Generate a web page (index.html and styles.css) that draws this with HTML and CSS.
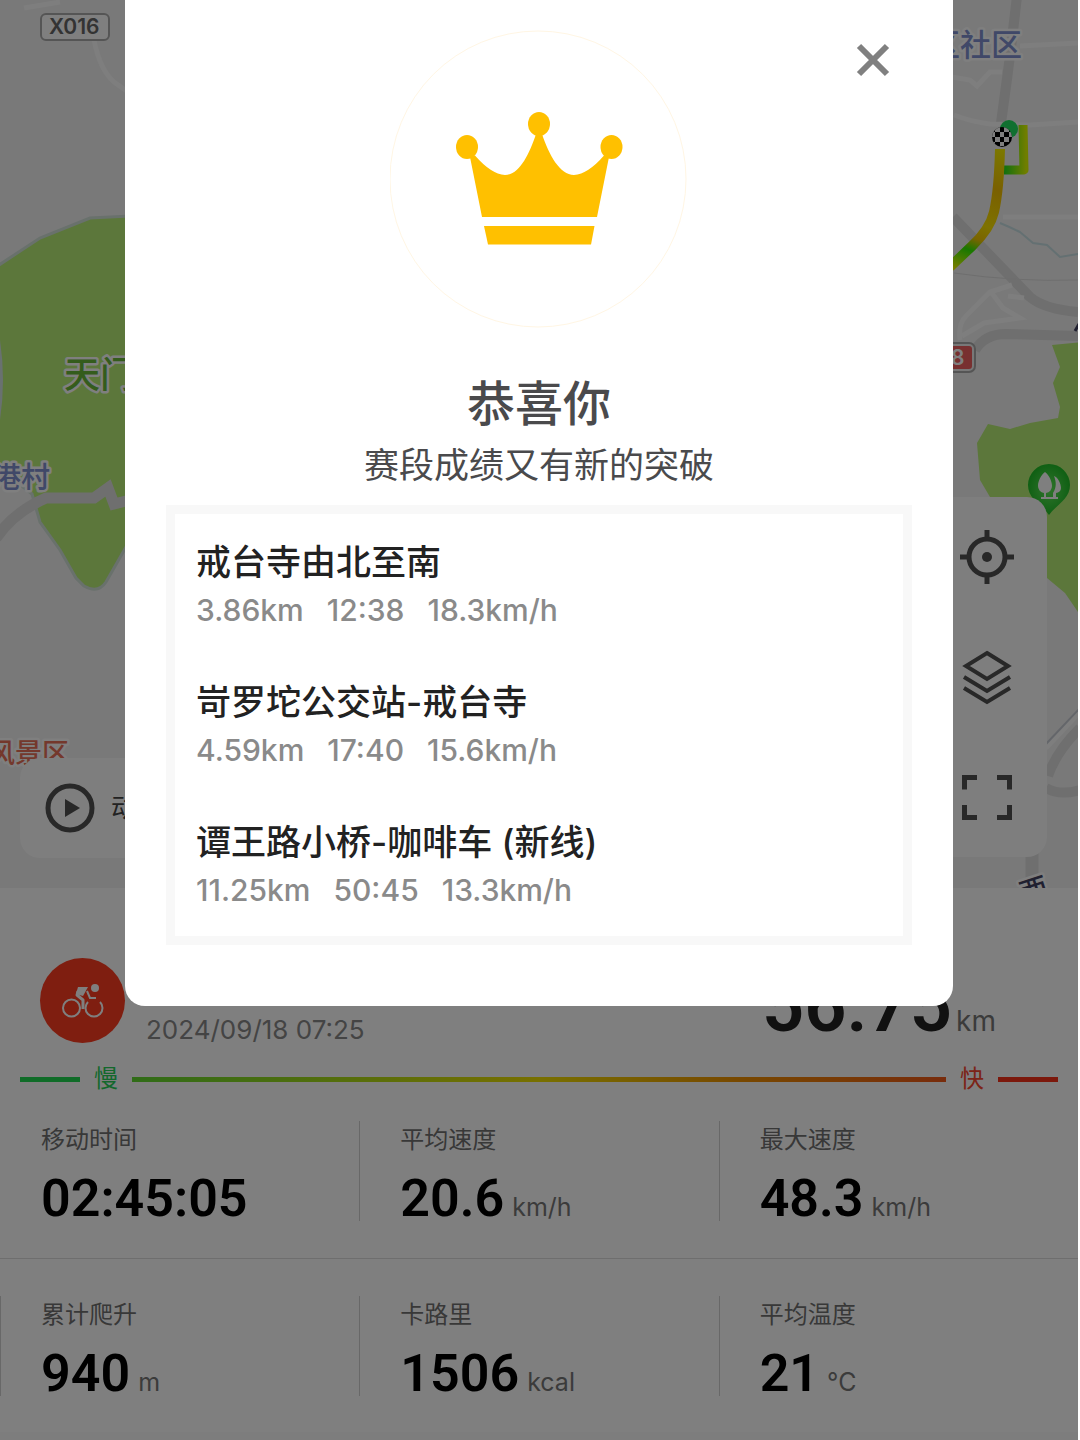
FILE: index.html
```html
<!DOCTYPE html>
<html lang="zh-CN">
<head>
<meta charset="utf-8">
<meta name="viewport" content="width=device-width, initial-scale=1">
<title>骑行记录</title>
<link rel="stylesheet" href="styles.css">
</head>
<body>
<div class="app">
  <main class="ride">
    <section class="map" aria-label="地图">
      <svg class="map-canvas" viewBox="0 0 1078 888" preserveAspectRatio="xMinYMin slice">
        <defs>
          <linearGradient id="track" gradientUnits="userSpaceOnUse" x1="1000" y1="150" x2="953" y2="268">
            <stop offset="0" stop-color="#f8f000"/>
            <stop offset=".3" stop-color="#f4c000"/>
            <stop offset=".6" stop-color="#fce400"/>
            <stop offset=".72" stop-color="#f4c800"/>
            <stop offset=".82" stop-color="#30f000"/>
            <stop offset="1" stop-color="#f4fc00"/>
          </linearGradient>
          <linearGradient id="turn" gradientUnits="userSpaceOnUse" x1="1004" y1="0" x2="1026" y2="0">
            <stop offset="0" stop-color="#20e020"/>
            <stop offset="1" stop-color="#e0fc00"/>
          </linearGradient>
          <radialGradient id="pin">
            <stop offset="0" stop-color="#60e858"/>
            <stop offset="1" stop-color="#20c028"/>
          </radialGradient>
          <clipPath id="flag"><circle cx="1002" cy="137" r="10"/></clipPath>
        </defs>

        <!-- parks -->
        <g fill="#b8ee76" stroke="#d2e2d8" stroke-width="3">
          <path d="M-4 267 L40 238 L90 218 L130 216 V540 L106 582 Q98 594 84 586 L76 578 L60 550 L40 522 L32 494 L-4 466Z"/>
          <path d="M1052 345 L1082 342 V618 L1065 593 L1047 578 L990 497 L980 480 L977 443 L988 424 L1010 429 L1030 423 L1058 418 L1060 407 L1053 383 L1060 367Z" stroke="none"/>
        </g>
        <path d="M0 340 Q6 380 0 420Z" fill="#d2e2e0"/>

        <!-- roads -->
        <g fill="none" stroke="#dedede" stroke-width="10">
          <path d="M-4 538 Q14 512 46 498 H94 L108 488 L114 504 L130 500" stroke-width="11"/>
          <path d="M1017 -4 Q1010 60 1001 123"/>
          <path d="M953 217 L1030 297 Q1044 309 1078 312"/>
          <path d="M975 350 Q985 334 1006 334 L1078 336"/>
          <path d="M1032 850 V888" stroke-width="13"/>
          <path d="M1048 776 Q1056 752 1080 728 M1046 788 Q1060 796 1080 790"/>
        </g>
        <g fill="none" stroke="#fcfcfc" stroke-width="5">
          <path d="M24 8 L60 2 M94 40 Q100 70 114 82 L128 92"/>
          <path d="M1020 46 L1078 43 M952 77 L970 80 L977 86 L990 72 H1002 M954 115 Q972 122 990 124 L1030 125 L1078 122 M1003 217 H1078"/>
          <path d="M960 340 Q958 324 966 316 L990 292 L1012 285 M991 292 L1003 308 L1020 318 L984 323 L962 336 M1008 296 L1024 298"/>
          <path d="M1046 748 L1080 712"/>
        </g>
        <path d="M954 273 Q1016 282 1078 280" fill="none" stroke="#dddddd"/>
        <path d="M1046 744 L1080 708" fill="none" stroke="#c8ccd4" stroke-width="2"/>
        <path d="M1000 223 Q1012 228 1020 232 L1033 243 L1047 245 L1060 257 L1078 254" fill="none" stroke="#c8e0e4" stroke-width="2"/>
        <path d="M1075 331 L1079 324" stroke="#404060" stroke-width="3"/>

        <!-- recorded track -->
        <g fill="none" stroke-width="10" stroke-linejoin="round">
          <circle cx="1009" cy="129" r="9" fill="#20e060"/>
          <path d="M1023 125 L1024 170 H1004" stroke="url(#turn)" stroke-width="9"/>
          <path d="M1000 149 Q999 190 994 212 Q990 229 972 246 L950 267" stroke="url(#track)"/>
        </g>
        <g clip-path="url(#flag)">
          <rect x="992" y="127" width="20" height="20" fill="#000"/>
          <path fill="#fff" d="M995 127h5v5h-5zM1004 127h5v5h-5zM991 132h4v5h-4zM1000 132h4v5h-4zM1009 132h4v5h-4zM995 137h5v5h-5zM1004 137h5v5h-5zM991 142h4v4h-4zM1000 142h4v4h-4z"/>
        </g>

        <!-- landmark pin -->
        <path d="M1049 464 a21 21 0 0 1 21 21 c0 14 -13 19 -21 30 c-8 -11 -21 -16 -21 -30 a21 21 0 0 1 21 -21z" fill="url(#pin)"/>
        <path d="M1045 472 c4 3 7 9 7 14 a7 7 0 0 1 -6 7 v4 h7 v-4 c4 -6 3 -12 1 -17 c4 1 7 8 7 12 a5 5 0 0 1 -5 5 v4 h2 v2 h-17 v-2 h3 v-4 a7 7 0 0 1 -6 -7 c0 -5 3 -11 7 -14z" fill="#fff"/>

        <!-- road signs -->
        <rect x="41" y="14" width="68" height="26" rx="5" fill="#fff" stroke="#aaa" stroke-width="2"/>
        <text class="sign" x="49" y="34">X016</text>
        <rect x="926" y="343" width="49" height="29" rx="6" fill="#f0f0f0" stroke="#aaa" stroke-width="2"/>
        <rect x="930" y="346" width="42" height="23" rx="3" fill="#f06060"/>
        <text class="sign sign-light" x="951" y="365">8</text>

        <!-- place names -->
        <g class="place">
          <text class="park" x="64" y="388">天门</text>
          <text class="village" x="-8" y="488">港村</text>
          <text class="village big" x="929" y="56">区社区</text>
          <text class="scenic" x="-12" y="763">风景区</text>
          <text class="town" x="1020" y="900" transform="rotate(-18 1034 890)">西</text>
        </g>
      </svg>

      <button class="replay" type="button">
        <svg width="50" height="50" viewBox="0 0 50 50"><circle cx="25" cy="25" r="22" fill="none" stroke="#505050" stroke-width="5"/><path d="M20 16 L35 25 L20 34Z" fill="#505050"/></svg>
        动
      </button>

      <div class="tools">
        <button type="button" aria-label="定位">
          <svg width="56" height="56" viewBox="0 0 56 56" fill="none" stroke="#505050" stroke-width="5"><circle cx="28" cy="28" r="18"/><path d="M28 1v11M28 44v11M1 28h11M44 28h11"/><circle cx="28" cy="28" r="5" fill="#505050" stroke="none"/></svg>
        </button>
        <button type="button" aria-label="图层">
          <svg width="56" height="56" viewBox="0 0 56 56" fill="none" stroke="#505050" stroke-width="4"><path d="M28 4 L49 17 L28 30 L7 17Z"/><path d="M5 28 L28 42 L51 28M5 39 L28 53 L51 39"/></svg>
        </button>
        <button type="button" aria-label="全屏">
          <svg width="56" height="56" viewBox="0 0 56 56" fill="none" stroke="#505050" stroke-width="5"><path d="M5.500 20.500V8.500H18M38 8.500H50.500V20.500M5.500 36V48.500H18M38 48.500H50.500V36"/></svg>
        </button>
      </div>
    </section>

    <section class="details">
      <header class="summary">
        <span class="sport">
          <svg width="42" height="36" viewBox="0 0 42 36" fill="none" stroke="#fff" stroke-width="2"><circle cx="9.500" cy="25" r="8.500"/><path d="M26 19 A8.500 8.500 0 1 0 38 19"/><path d="M16 8 L15 12 L21 17 V26" stroke-width="3" stroke-linejoin="round"/><path d="M25 8 L28 15 H34"/><path d="M16 4 H26 L21 13 L14 11Z" fill="#fff" stroke="none"/><circle cx="33" cy="5" r="4" fill="#fff" stroke="none"/></svg>
        </span>
        <time class="date" datetime="2024-09-18T07:25">2024/09/18 07:25</time>
        <p class="distance"><strong>56.75</strong><span>km</span></p>
      </header>

      <div class="pace">
        <i class="pace-end slow"></i>
        <span class="slow-text">慢</span>
        <i class="pace-scale"></i>
        <span class="fast-text">快</span>
        <i class="pace-end fast"></i>
      </div>

      <div class="metrics">
        <dl class="metric"><dt>移动时间</dt><dd>02:45:05</dd></dl>
        <dl class="metric"><dt>平均速度</dt><dd>20.6 <small>km/h</small></dd></dl>
        <dl class="metric"><dt>最大速度</dt><dd>48.3 <small>km/h</small></dd></dl>
      </div>
      <div class="metrics metrics-more">
        <dl class="metric"><dt>累计爬升</dt><dd>940 <small>m</small></dd></dl>
        <dl class="metric"><dt>卡路里</dt><dd>1506 <small>kcal</small></dd></dl>
        <dl class="metric"><dt>平均温度</dt><dd>21 <small>°C</small></dd></dl>
      </div>
    </section>
  </main>

  <div class="backdrop">
    <section class="dialog" role="dialog" aria-modal="true" aria-labelledby="dialog-title">
      <button class="close" type="button" aria-label="关闭">
        <svg width="34" height="34" viewBox="0 0 34 34" fill="none" stroke="#808080" stroke-width="6"><path d="M3 3 L31 31M31 3 L3 31"/></svg>
      </button>
      <svg class="crown" viewBox="389 30 298 298">
        <circle cx="537" cy="179" r="148" fill="none" stroke="#fff6e4" stroke-width="1"/>
        <g fill="#ffc000">
          <ellipse cx="466" cy="147" rx="11" ry="12"/>
          <ellipse cx="538" cy="124" rx="11" ry="12"/>
          <ellipse cx="610.500" cy="147" rx="11" ry="12"/>
          <path d="M469 157 L474 155.500 Q490 174 504 175 C518 175 528 155 535 134 H541 C548 155 559 175 573 175 Q587 174 603 155.500 L608 157 L596 217 H481Z"/>
          <path d="M483 226 H593.500 L590 244.500 H487Z"/>
        </g>
      </svg>
      <h1 id="dialog-title">恭喜你</h1>
      <p class="subtitle">赛段成绩又有新的突破</p>
      <ul class="segments">
        <li><h2>戒台寺由北至南</h2><p><span>3.86km</span><span>12:38</span><span>18.3km/h</span></p></li>
        <li><h2>岢罗坨公交站-戒台寺</h2><p><span>4.59km</span><span>17:40</span><span>15.6km/h</span></p></li>
        <li><h2>谭王路小桥-咖啡车 (新线)</h2><p><span>11.25km</span><span>50:45</span><span>13.3km/h</span></p></li>
      </ul>
    </section>
  </div>
</div>
</body>
</html>
```
FILE: styles.css
```css
* { box-sizing: border-box; }

body {
  margin: 0;
  background: #fff;
  color: #000;
  font-family: Inter, "Noto Sans CJK SC", sans-serif;
}

h1, h2, p, ul, dl, dd { margin: 0; }
ul { padding: 0; list-style: none; }
svg { display: block; flex: none; }

button {
  padding: 0;
  border: 0;
  background: none;
  font: inherit;
  cursor: pointer;
}

.app {
  position: relative;
  margin-right: 2px;
  overflow: hidden;
}

.ride {
  display: flex;
  flex-direction: column;
  min-height: 100vh;
}

/* Map */
.map {
  position: relative;
  flex: 1;
  min-height: 500px;
  overflow: hidden;
  background: #f2f2f2;
}

.map-canvas {
  position: absolute;
  inset: 0;
  width: 100%;
  height: 100%;
}

.sign { font-size: 21px; font-weight: 600; fill: #666; }
.sign-light { fill: #fff; }
.place { font-weight: 500; paint-order: stroke; stroke: #fff; stroke-width: 5px; stroke-linejoin: round; }
.park { font-size: 36px; fill: #68b838; }
.village { font-size: 29px; fill: #8090d0; }
.village.big { font-size: 31px; }
.scenic { font-size: 27px; fill: #e87058; }
.town { font-size: 28px; fill: #404060; }

.replay {
  position: absolute;
  left: 20px;
  bottom: 30px;
  display: flex;
  align-items: center;
  gap: 16px;
  width: 240px;
  padding: 25px;
  border-radius: 20px;
  background: #fcfcfc;
  font-size: 26px;
  line-height: 50px;
  color: #444;
}

.tools {
  position: absolute;
  right: 31px;
  bottom: 31px;
  display: grid;
  border-radius: 20px;
  background: #fcfcfc;
}

.tools button { padding: 32px; }

/* Ride details */
.details {
  border-bottom: 8px solid #fafafa;
  background: #fff;
}

.summary {
  display: flex;
  align-items: flex-end;
  padding: 70px 82px 0 40px;
}

.sport {
  display: grid;
  place-items: center;
  width: 85px;
  height: 85px;
  border-radius: 50%;
  background: #ff3c20;
}

.date {
  flex: 1;
  padding-left: 21px;
  font-size: 26px;
  line-height: 26px;
  color: #888;
}

.distance {
  display: flex;
  align-items: baseline;
  gap: 4px;
  padding-bottom: 8px;
  font-size: 28px;
  line-height: 28px;
  color: #777;
}

.distance strong {
  font-family: Roboto, sans-serif;
  font-size: 74px;
  font-weight: 600;
  line-height: 50px;
  color: #222;
}

.pace {
  display: flex;
  align-items: center;
  gap: 14px;
  padding: 24px 20px 0;
  font-size: 24px;
  line-height: 24px;
}

.pace-end { width: 60px; height: 5px; }
.slow { background: #20d850; }
.fast { background: #f83018; }
.slow-text { color: #28d058; }
.fast-text { color: #f84830; }

.pace-scale {
  flex: 1;
  height: 5px;
  background: linear-gradient(90deg, #60d830, #f0e000 50%, #f09000 75%, #f05818);
}

.metrics {
  display: grid;
  grid-template-columns: repeat(3, 1fr);
  padding: 30px 0 37px;
  border-bottom: 1px solid #dcdcdc;
}

.metrics-more {
  padding: 37px 0 36px;
  border-bottom: 0;
}

.metric {
  padding-left: 40px;
  border-left: 1px solid #d0d0d0;
}

.metrics:not(.metrics-more) .metric:first-child { border-color: transparent; }

.metric dt {
  font-size: 24px;
  line-height: 38px;
  color: #707070;
}

.metric dd {
  display: flex;
  align-items: baseline;
  gap: 8px;
  padding-top: 18px;
  font: 600 52px/44px Roboto, sans-serif;
}

.metric small {
  font: 400 25px/25px Inter, sans-serif;
  color: #777;
}

/* Achievement dialog */
.backdrop {
  position: absolute;
  inset: 0;
  display: flex;
  justify-content: center;
  align-items: flex-start;
  background: rgba(0, 0, 0, .5);
}

.dialog {
  position: relative;
  width: calc(100% - 250px);
  padding: 30px 41px 61px;
  border-radius: 0 0 20px 20px;
  background: #fff;
  text-align: center;
}

.close {
  position: absolute;
  top: 43px;
  right: 63px;
}

.crown {
  width: 298px;
  max-width: 100%;
  margin: 0 auto 40px;
}

.dialog h1 {
  font-size: 48px;
  font-weight: 500;
  line-height: 72px;
  color: #4a4a4c;
}

.subtitle {
  font-size: 35px;
  line-height: 50px;
  color: #4a4a4c;
}

.segments {
  display: grid;
  gap: 44px;
  margin-top: 15px;
  padding: 23px 21px;
  border: 9px solid #f8f8f8;
  text-align: left;
}

.segments h2 {
  font-size: 35px;
  font-weight: 500;
  line-height: 50px;
  color: #222;
}

.segments p {
  display: flex;
  gap: 23px;
  font-size: 30px;
  font-weight: 500;
  line-height: 46px;
  color: #8a8a8a;
}
```
